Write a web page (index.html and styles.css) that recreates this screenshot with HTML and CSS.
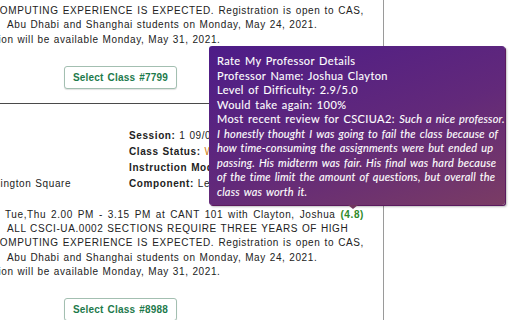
FILE: index.html
```html
<!DOCTYPE html>
<html lang="en">
<head>
    <meta charset="UTF-8">
    <title>Class Search</title>
    <link rel="stylesheet" href="styles.css">
</head>
<body>
    <div class="page">
        <!-- Risultati della ricerca -->
        <div class="results">
            <section class="course">
                <div class="notes">
                    <div class="ln ln-cut just">COMPUTING EXPERIENCE IS EXPECTED. Registration is open to CAS,</div>
                    <div class="ln ln-in">Abu Dhabi and Shanghai students on Monday, May 24, 2021.</div>
                    <div class="ln ln-reg">Registration will be available Monday, May 31, 2021.</div>
                </div>
                <div class="actions">
                    <button class="select-btn">Select Class #7799</button>
                </div>
            </section>

            <section class="course">
                <div class="info">
                    <div class="info-left">
                        <div class="row"></div>
                        <div class="row"></div>
                        <div class="row"></div>
                        <div class="row">Washington Square</div>
                    </div>
                    <div class="info-right">
                        <div class="row"><b>Session:</b> 1 09/01/2021 - 12/14/2021</div>
                        <div class="row"><b>Class Status:</b> <span class="status">Wait List (0)</span></div>
                        <div class="row"><b>Instruction Mode:</b> In-Person</div>
                        <div class="row"><b>Component:</b> Lecture</div>
                    </div>
                </div>
                <div class="meeting">Tue,Thu 2.00 PM - 3.15 PM at CANT 101 with Clayton, Joshua <span class="rating">(4.8)</span></div>
                <div class="notes">
                    <div class="ln ln-in">ALL CSCI-UA.0002 SECTIONS REQUIRE THREE YEARS OF HIGH</div>
                    <div class="ln ln-cut just">COMPUTING EXPERIENCE IS EXPECTED. Registration is open to CAS,</div>
                    <div class="ln ln-in">Abu Dhabi and Shanghai students on Monday, May 24, 2021.</div>
                    <div class="ln ln-reg">Registration will be available Monday, May 31, 2021.</div>
                </div>
                <div class="actions">
                    <button class="select-btn">Select Class #8988</button>
                </div>
            </section>
        </div>
        <div class="side"></div>

        <!-- Tooltip Rate My Professor -->
        <div class="rmp-tip">
            <div>Rate My Professor Details</div>
            <div>Professor Name: Joshua Clayton</div>
            <div>Level of Difficulty: 2.9/5.0</div>
            <div>Would take again: 100%</div>
            <div>Most recent review for CSCIUA2: <i>Such a nice professor.<br>I honestly thought I was going to fail the class because of<br>how time-consuming the assignments were but ended up<br>passing. His midterm was fair. His final was hard because<br>of the time limit the amount of questions, but overall the<br>class was worth it.</i></div>
        </div>
    </div>
</body>
</html>
```

FILE: styles.css
```css
* { margin: 0; padding: 0; box-sizing: border-box; }

body {
    background: #ffffff;
    font-family: 'Liberation Sans', Arial, sans-serif;
    color: #222222;
    overflow: hidden;
}

.page {
    display: flex;
    width: 512px;
    height: 320px;
    position: relative;
    overflow: hidden;
}

/* Colonna risultati */
.results {
    width: 384px;
    flex: none;
    border-right: 1px solid #9a9a9a;
    padding-top: 4px;
    overflow: hidden;
}

.side {
    flex: 1;
}

.course {
    font-size: 10px;
    letter-spacing: 0.6px;
    word-spacing: 0.5px;
}

.course:first-child {
    padding-bottom: 14px;
    border-bottom: 1px solid #4a4a4a;
}

.course + .course {
    padding-top: 24px;
}

/* Righe di testo */
.ln {
    line-height: 14.3px;
    height: 14.3px;
    white-space: nowrap;
}

.ln-cut { margin-left: -8px; width: 372px; }
.ln-in { margin-left: 7px; }
.ln-reg { margin-left: -47px; }

.just {
    text-align: justify;
    text-align-last: justify;
}

/* Info corso */
.info {
    display: flex;
}

.info-left {
    width: 156px;
    margin-left: -27px;
}

.row {
    line-height: 16px;
    height: 16px;
    white-space: nowrap;
}

.status { color: #d07a10; }

.meeting {
    margin-top: 16px;
    margin-left: 5px;
    width: 359px;
    line-height: 14.3px;
    white-space: nowrap;
    text-align: justify;
    text-align-last: justify;
}

.rating {
    color: #2f8a2a;
    font-weight: bold;
}

/* Bottone */
.actions {
    margin-top: 19px;
    padding-left: 64px;
}

.select-btn {
    width: 113px;
    height: 23px;
    background: #ffffff;
    border: 1px solid #a3bfb1;
    border-radius: 3px;
    box-shadow: 0 1px 1px rgba(0, 0, 0, 0.12);
    color: #1d7a4c;
    font-family: 'Liberation Sans', Arial, sans-serif;
    font-size: 10px;
    font-weight: bold;
    letter-spacing: 0.2px;
    word-spacing: 1px;
}

/* Tooltip */
.rmp-tip {
    position: absolute;
    left: 209px;
    top: 46px;
    width: 296px;
    height: 159px;
    padding: 8px 0 6px 8px;
    border-radius: 3px;
    background: linear-gradient(160deg, #4d1c88 0%, #62297a 55%, #7a3c64 100%);
    box-shadow: 1px 1px 0 #5b1a5e, 2px 2px 2px rgba(0, 0, 0, 0.25);
    color: #ffffff;
    font-family: 'Lato', sans-serif;
    font-size: 11px;
    line-height: 14.5px;
    letter-spacing: 0.4px;
    word-spacing: 1.2px;
    white-space: nowrap;
    -webkit-text-stroke: 0.1px #ffffff;
}

.rmp-tip i {
    letter-spacing: 0.18px;
}

.rmp-tip::after {
    content: "";
    position: absolute;
    left: 139px;
    bottom: -4px;
    border-left: 5px solid transparent;
    border-right: 5px solid transparent;
    border-top: 4px solid #70365e;
}
```
